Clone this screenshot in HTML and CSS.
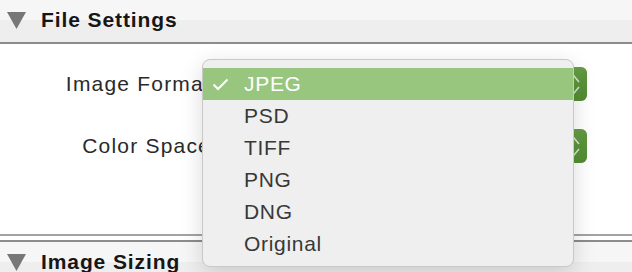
FILE: index.html
```html
<!DOCTYPE html>
<html lang="en">
<head>
  <meta charset="UTF-8">
  <meta name="viewport" content="width=device-width, initial-scale=1.0">
  <title>Export Settings</title>
  <link rel="stylesheet" href="styles.css">
</head>
<body>
  <div class="panel">
    <div class="section-head">
      <svg class="disclosure" width="19" height="17" viewBox="0 0 19 17"><polygon points="0,0 19,0 9.5,17" /></svg>
      <span>File Settings</span>
    </div>

    <div class="section-body">
      <div class="field">
        <label>Image Format:</label>
        <div class="popup-btn">
          <span class="stepper">
            <svg width="27" height="34" viewBox="0 0 27 34"><path d="M9 15 L14 9 L19 15 M9 20 L14 26 L19 20" /></svg>
          </span>
        </div>
      </div>
      <div class="field">
        <label>Color Space:</label>
        <div class="popup-btn">
          <span class="stepper">
            <svg width="27" height="34" viewBox="0 0 27 34"><path d="M9 15 L14 9 L19 15 M9 20 L14 26 L19 20" /></svg>
          </span>
        </div>
      </div>

      <!-- open menu of the Image Format popup -->
      <ul class="menu">
        <li class="selected">
          <svg class="check" width="17" height="13" viewBox="0 0 17 13"><path d="M1.5 6.5 L6 11 L15.5 1.5" /></svg>
          JPEG
        </li>
        <li>PSD</li>
        <li>TIFF</li>
        <li>PNG</li>
        <li>DNG</li>
        <li>Original</li>
      </ul>
    </div>

    <div class="section-head second">
      <svg class="disclosure" width="19" height="17" viewBox="0 0 19 17"><polygon points="0,0 19,0 9.5,17" /></svg>
      <span>Image Sizing</span>
    </div>
  </div>
</body>
</html>
```

FILE: styles.css
```css
body {
  margin: 0;
  background: #fff;
  font-family: "Liberation Sans", Arial, sans-serif;
  overflow: hidden;
}
.panel {
  width: 632px;
}
.section-head {
  height: 42px;
  display: flex;
  align-items: flex-start;
  background: linear-gradient(#f6f6f6 0, #f6f6f6 48%, #eeeeee 48%, #ededed 100%);
  border-bottom: 2px solid #8c8c8c;
}
.section-head span {
  font-size: 21px;
  font-weight: bold;
  line-height: 40px;
  letter-spacing: 0.9px;
  color: #161616;
  margin-left: 15px;
}
.section-head .disclosure {
  margin: 12px 0 0 7px;
  fill: #777;
}
.section-head.second {
  margin-top: 4px;
  border-top: 2px solid #8c8c8c;
  border-bottom: none;
}
.section-body {
  position: relative;
  height: 167px;
  padding-top: 23px;
  display: flex;
  flex-direction: column;
  gap: 28px;
  border-bottom: 2px solid #a2a2a2;
}
.field {
  display: flex;
  align-items: center;
  height: 34px;
}
.field label {
  width: 218px;
  text-align: right;
  font-size: 21px;
  letter-spacing: 1.2px;
  color: #2a2a2a;
}
.popup-btn {
  margin-left: 4px;
  width: 365px;
  height: 34px;
  display: flex;
  justify-content: flex-end;
  background: #fff;
  border: 1px solid #c4c4c4;
  border-radius: 6px;
  box-sizing: border-box;
}
.stepper {
  width: 27px;
  height: 34px;
  margin: -1px -1px 0 0;
  border-radius: 0 6px 6px 0;
  background: linear-gradient(135deg, #74a853, #5a9439 60%, #4f8a31);
}
.stepper path {
  fill: none;
  stroke: rgba(255, 255, 255, 0.75);
  stroke-width: 1.6;
}
.menu {
  position: absolute;
  left: 202px;
  top: 15px;
  width: 372px;
  height: 208px;
  box-sizing: border-box;
  margin: 0;
  padding: 8px 0 0;
  list-style: none;
  background: #efefef;
  border: 1px solid #c9c9c9;
  border-radius: 8px;
  box-shadow: 0 6px 22px rgba(0, 0, 0, 0.15);
}
.menu li {
  position: relative;
  height: 32px;
  line-height: 32px;
  padding-left: 41px;
  font-size: 21px;
  letter-spacing: 0.7px;
  color: #383838;
}
.menu li.selected {
  background: #98c67f;
  color: #fff;
}
.check {
  position: absolute;
  left: 9px;
  top: 10px;
}
.check path {
  fill: none;
  stroke: #fff;
  stroke-width: 2;
}
```
